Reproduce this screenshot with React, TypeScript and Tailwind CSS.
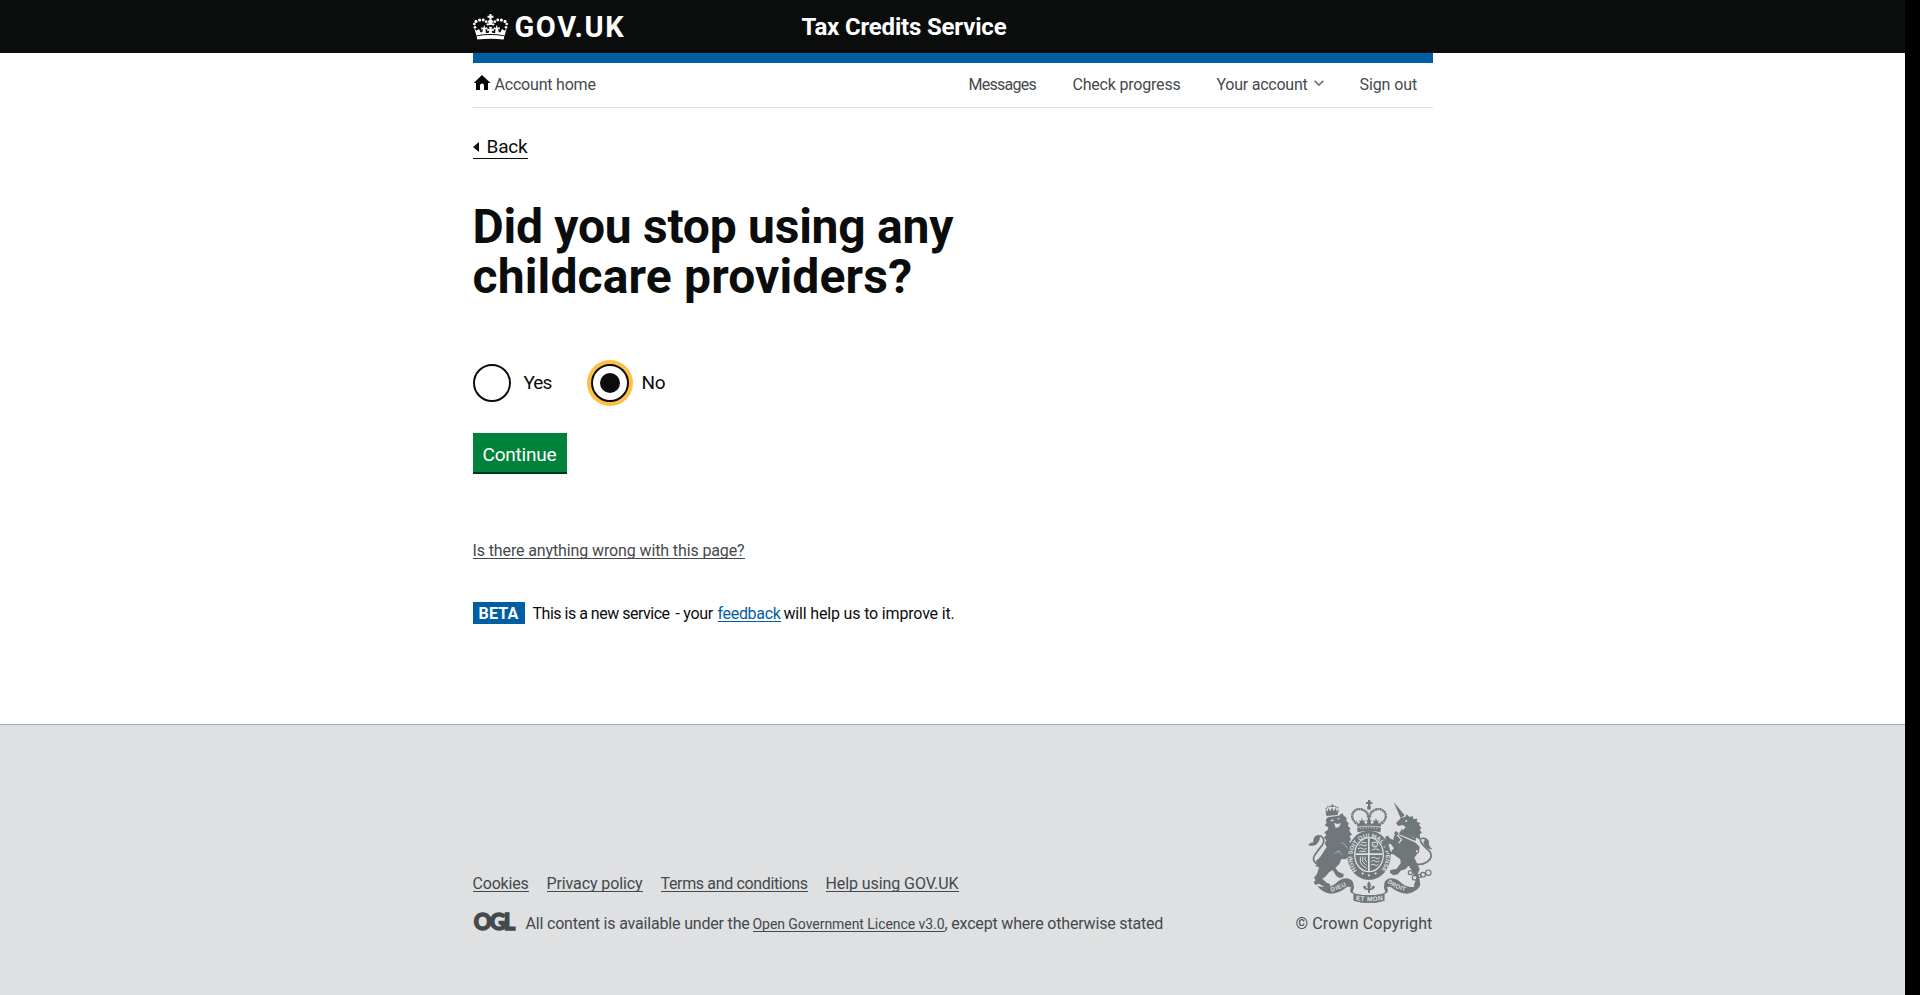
function Crown() {
  const beads: [number, number, number][] = [
    [29, 63, 4], [27, 53, 4], [32, 45, 4.6], [43, 41, 4.8], [54, 41, 4.4], [63, 46, 4.2], [68, 54, 3.6],
    [123, 63, 4], [125, 53, 4], [120, 45, 4.6], [109, 41, 4.8], [98, 41, 4.4], [89, 46, 4.2], [84, 54, 3.6],
  ];
  return (
    <svg className="block h-[26px] w-[35px]" viewBox="23 23 106 78" fill="#fff">
      {beads.map(([x, y, r]) => (
        <circle key={`${x}-${y}`} cx={x} cy={y} r={r} />
      ))}
      <path d="M73 23h6v5h6v6h-6v6l5 4-4 12h-8l-4-12 5-4v-6h-6v-6h6z" />
      <path d="M27 66 33 73 41 68 46 78 51 78 53 67 48 70 48 62 54 65 57 55 60 65 66 62 66 70 61 67 62 80 70 80 73 73 66 75 67 66 73 69 72 61 80 61 79 69 85 66 86 75 79 73 82 80 90 80 91 67 86 70 86 62 92 65 95 55 98 65 104 62 104 70 99 67 101 78 106 78 111 68 119 73 125 66 119 88 Q76 79 33 88Z" />
      <path d="M34 90Q76 82 118 90L116 100Q76 95 36 100Z" />
    </svg>
  );
}

function RoyalArms() {
  return (
    <svg className="block h-[103px] w-[125px]" viewBox="84 30 375 309" fill="#6f777b">
      {/* lion */}
      <path d="M136 58 142 65 145 54 151 64 156 52 161 64 168 53 170 65 177 56 173 75 139 78Z" />
      <path d="M138 57Q142 48 154 49Q170 47 175 56" fill="none" stroke="#6f777b" strokeWidth="4" strokeDasharray="4 2" />
      <path d="M152 47h3v-4h4v4h3v3h-10z" />
      <path d="M143 82 176 77 187 69 190 76 200 84 199 92 207 101 203 106 212 117 207 121 216 134 209 138 213 151 207 154 221 170 219 181 214 186 219 194 213 207 204 202 196 208 184 207 178 222 166 234 176 246 191 252 190 262 178 264 169 258 158 240 147 247 136 260 127 266 140 278 151 283 149 291 133 291 117 281 107 285 101 277 107 270 102 263 111 252 117 232 105 228 115 221 107 214 120 202 130 187 140 171 134 160 139 151 132 143 139 135 133 127 143 120 145 112 134 106 140 99 137 91Z" />
      <path d="M122 226Q91 216 105 194Q116 178 128 164Q136 147 124 139Q111 133 104 150" fill="none" stroke="#6f777b" strokeWidth="5" />
      <path d="M84 165Q91 157 100 157Q99 139 112 136Q126 139 115 156Q105 173 84 165Z" />
      <path d="M152 91l7-3 3 3-8 4zM171 86l8-3-2 6zM162 98l11 4 10-3-6 12-10 3z" fill="#dee0e2" />
      <path d="M183 157l12 7 8 12M163 190l16-7M172 180l15 15" fill="none" stroke="#dee0e2" strokeWidth="1.5" />
      {/* crown */}
      <path d="M264 30h7v6h6v6h-6v7h-7v-7h-6v-6h6z" />
      <circle cx="267" cy="53" r="6" />
      <g fill="none" stroke="#6f777b" strokeWidth="7" strokeDasharray="6 1.2">
        <path d="M229 101Q211 84 219 68Q232 50 254 62Q265 69 264 82" />
        <path d="M305 101Q323 84 315 68Q302 50 280 62Q269 69 270 82" />
      </g>
      <path d="M228 90 235 101 240 98 237 91 243 93 246 84 249 93 255 91 253 99 259 102 263 95 258 92 264 89 263 82 271 82 270 89 276 92 271 95 275 102 281 99 279 91 285 93 288 84 291 93 297 91 294 98 299 101 306 90 302 110Q267 104 232 110Z" />
      <path d="M231 113Q267 106 303 113L301 127Q267 117 233 127Z" />
      <path d="M240 116Q267 111 295 116" fill="none" stroke="#dee0e2" strokeWidth="2.5" strokeDasharray="4 4" />
      {/* garter and shield */}
      <ellipse cx="267" cy="196" rx="65" ry="74" />
      <ellipse cx="267" cy="194" rx="45" ry="53" fill="#dee0e2" />
      <ellipse cx="267" cy="194" rx="41" ry="49" />
      <path id="garter" d="M231 241A50 58 0 1 1 303 241" fill="none" />
      <text fill="#dee0e2" className="font-['Liberation_Sans'] text-[18px] font-bold">
        <textPath href="#garter">HONI SOIT QUI MAL Y PENSE</textPath>
      </text>
      <path d="M264 145h5v98h-5zM227 190h80v5h-80z" fill="#dee0e2" />
      <g fill="none" stroke="#dee0e2" strokeWidth="3">
        <path d="M236 166q7-5 13 0t12-2M234 176q7-5 13 0t13-1M238 184h20M245 158h14" />
        <path d="M277 157h15v11q-8 7-15 0zM281 163l7 9M275 180q10-7 24 0" />
        <path d="M241 200v17q6 13 20 19M248 200v15l12 12M255 200v10l6 6" />
        <path d="M274 204q8-5 13 0t13-1M274 214q7-5 13 0t12-2M273 225q7-5 12 0t9-2" />
      </g>
      <path d="M244 250l4-3 4 3-4 4zM263 256l4-3 4 3-4 4zM283 250l4-3 4 3-4 4z" fill="#dee0e2" />
      {/* unicorn */}
      <path d="M341 36 374 76 362 85Z" />
      <path d="M348 99 363 84 376 80 380 73 389 81 398 78 400 87 412 86 410 95 421 99 417 106 425 114 419 118 426 130 419 132 421 149 411 144 364 126 377 112 369 105 355 108Z" />
      <path d="M361 130 410 151" stroke="#6f777b" strokeWidth="5" strokeDasharray="6 3" />
      <path d="M362 123l4-9 3 12 8-7 2 12 10-6 0 12 11-5-2 11 11-4-4 13-49-20z" />
      <path d="M356 135 407 158 419 171 417 184 403 203 411 220 419 237 413 252 419 270 421 286 410 294 401 288 407 271 398 246 386 227 377 237 362 242 354 253 340 256 330 248 331 240 349 237 362 220 361 208 346 197 334 183 342 175 333 163 324 160 316 148 317 139 325 137 328 144 340 150 342 139 351 126Z" />
      <path d="M330 157 323 167 332 185 348 188 346 194 328 191 315 169 321 154ZM347 123l8 5-6 9-7-6z" />
      <path d="M408 222Q424 226 441 216Q461 202 449 184Q426 164 422 154Q419 143 431 145Q443 147 445 158" fill="none" stroke="#6f777b" strokeWidth="5" />
      <path d="M430 158Q432 144 446 155Q445 169 458 178Q438 179 430 158Z" />
      <circle cx="379" cy="93" r="3" fill="#dee0e2" />
      <g fill="none" stroke="#6f777b" strokeWidth="3.5">
        <circle cx="391" cy="248" r="6" fill="#dee0e2" />
        <circle cx="404" cy="263" r="7" fill="#dee0e2" />
        <circle cx="419" cy="258" r="5" />
        <circle cx="429" cy="254" r="7" />
        <circle cx="445" cy="248" r="8" />
        <circle cx="411" cy="184" r="5" fill="#dee0e2" />
        <path d="M351 135l14 14-9 10" stroke="#dee0e2" />
      </g>
      {/* motto scroll */}
      <path d="M112 288Q145 297 166 281Q184 264 202 265Q222 269 220 287L208 292Q210 290 202 290Q176 311 151 311Q126 307 112 288Z" />
      <path d="M421 288Q388 297 367 281Q349 264 331 265Q311 269 313 287L325 292Q323 290 331 290Q357 311 382 311Q407 307 421 288Z" />
      <path d="M208 276Q216 285 211 298Q208 309 221 312L221 332Q267 345 313 332L313 312Q326 309 323 298Q318 285 326 276L314 284Q310 292 314 300Q320 310 304 312Q267 320 230 312Q214 310 220 300Q224 292 220 284Z" />
      <path d="M221 312Q267 320 313 312V332Q267 345 221 332Z" />
      <path id="dieu" d="M154 305Q184 298 207 281" fill="none" />
      <path id="mon" d="M227 330Q267 338 311 330" fill="none" />
      <path id="droit" d="M322 277Q350 301 388 305" fill="none" />
      <g fill="#dee0e2" className="font-['Liberation_Sans'] text-[18px] font-bold">
        <text className="tracking-[2px]"><textPath href="#dieu">DIEU</textPath></text>
        <text className="text-[20px] tracking-[1px]"><textPath href="#mon">ET MON</textPath></text>
        <text className="tracking-[1px]"><textPath href="#droit">DROIT</textPath></text>
      </g>
      <path d="M267 274q-9 10-3 20l-4 2q-1-12-9-8-4 5 3 9-2-1 5 3h5v8h6v-8h5q7-4 5-3 7-4 3-9-8-4-9 8l-4-2q6-10-3-20z" />
    </svg>
  );
}

function Radio({ label, checked, tracking }: { label: string; checked?: boolean; tracking: string }) {
  return (
    <label className="flex items-center">
      <span
        className={`flex size-[38px] shrink-0 items-center justify-center rounded-full border-2 border-[#0b0c0c] bg-white ${
          checked ? "shadow-[0_0_0_4px_#ffbf47]" : ""
        }`}
      >
        {checked && <span className="size-5 rounded-full bg-[#0b0c0c]" />}
      </span>
      <span className={`ml-[13px] text-[19px] leading-[24px] text-[#0b0c0c] ${tracking}`}>{label}</span>
    </label>
  );
}

const footerLinks = [
  { label: "Cookies", style: "w-[56px] tracking-[-0.2px]" },
  { label: "Privacy policy", style: "w-[96px] tracking-[-0.11px]" },
  { label: "Terms and conditions", style: "w-[147px] tracking-[-0.35px]" },
  { label: "Help using GOV.UK", style: "w-[133px] tracking-[-0.08px]" },
];

export default function App() {
  return (
    <div className="flex h-[995px] overflow-hidden bg-black font-[Roboto,sans-serif] text-[16px] leading-5 text-[#0b0c0c]">
      <div className="flex w-[1905px] flex-col bg-white">
        <header className="h-[53px] bg-[#0b0c0c] text-white">
          <div className="mx-auto flex h-full w-[960px] items-center">
            <div className="flex w-[329px] items-center">
              <Crown />
              <span className="ml-[7px] text-[29px] leading-[30px] font-bold tracking-[1.6px]">GOV.UK</span>
            </div>
            <span className="text-[24px] leading-[30px] font-bold tracking-[-0.18px]">Tax Credits Service</span>
          </div>
        </header>

        <main className="mx-auto flex w-[960px] flex-col items-start">
          <div className="h-[10px] w-full bg-[#005ea5]" />
          <nav className="flex h-[45px] w-full items-start justify-between border-b border-[#dee0e2] pt-[12px] pr-[16px] whitespace-nowrap text-[#45494c]">
            <a className="flex">
              <svg className="mr-[4px] h-[15px] w-[18px]" viewBox="0 0 18 15" fill="#000">
                <path d="M9 0 17.5 8H15v7h-4v-4.5a2 2 0 0 0-4 0V15H3V8H.8Z" />
              </svg>
              <span className="tracking-[-0.2px]">Account home</span>
            </a>
            <div className="flex">
              <a className="w-[104px] tracking-[-0.75px]">Messages</a>
              <a className="w-[144px] tracking-[-0.2px]">Check progress</a>
              <a className="flex w-[143px]">
                <span className="w-[97px] tracking-[-0.24px]">Your account</span>
                <svg className="mt-[5px] h-[7px] w-[10px]" viewBox="0 0 10 7" fill="none" stroke="#6f777b" strokeWidth="1.8">
                  <path d="M.7.8 5 5.1 9.3.8" />
                </svg>
              </a>
              <a className="w-[57px] tracking-[-0.1px]">Sign out</a>
            </div>
          </nav>

          <a className="mt-[26px] flex h-[25px] w-[55px] items-center border-b border-[#0b0c0c] pt-px text-[19px]">
            <svg className="mr-[8px] h-[10px] w-[6px]" viewBox="0 0 6 10" fill="#0b0c0c">
              <path d="M6 0v10L0 5z" />
            </svg>
            <span className="tracking-[-0.19px]">Back</span>
          </a>

          <h1 className="mt-[43px] text-[48px] leading-[50px] font-bold whitespace-nowrap">
            <span className="block tracking-[-0.25px]">Did you stop using any</span>
            <span className="block tracking-[0.15px]">childcare providers?</span>
          </h1>

          <div className="mt-[62px] flex gap-[40px]">
            <div className="w-[78px]">
              <Radio label="Yes" tracking="tracking-[-1px]" />
            </div>
            <Radio label="No" checked tracking="tracking-[-0.2px]" />
          </div>

          <button className="mt-[31px] h-[39px] w-[94px] bg-[#00823b] pt-[4px] text-[19px] tracking-[-0.2px] text-white shadow-[0_2px_0_#003618]">
            Continue
          </button>

          <a className="mt-[69px] h-[18px] border-b border-[#45494c] tracking-[-0.12px] whitespace-nowrap text-[#45494c]">
            Is there anything wrong with this page?
          </a>

          <div className="mt-[43px] flex h-[22px] items-center whitespace-nowrap">
            <strong className="flex h-[22px] w-[52px] items-center justify-center bg-[#005ea5] pt-px font-bold tracking-[0.2px] text-white">
              BETA
            </strong>
            <span className="ml-[8px] w-[143px] pt-px tracking-[-0.49px]">This is a new service</span>
            <span className="w-[42px] pt-px tracking-[-0.29px]">- your</span>
            <a className="h-[18px] w-[63px] border-b border-[#005ea5] leading-[20px] tracking-[-0.32px] text-[#005ea5]">feedback</a>
            <span className="ml-[3px] pt-px tracking-[-0.17px]">will help us to improve it.</span>
          </div>
        </main>

        <footer className="mt-auto h-[271px] border-t border-[#a1acb2] bg-[#dee0e2] text-[#45494c]">
          <div className="mx-auto flex w-[960px] items-end justify-between pt-[75px] whitespace-nowrap">
            <div className="-mb-px">
              <div className="flex gap-[18px]">
                {footerLinks.map((link) => (
                  <a key={link.label} className={`h-[18px] border-b border-[#45494c] ${link.style}`}>
                    {link.label}
                  </a>
                ))}
              </div>
              <div className="mt-[21px] flex h-[22px] items-center">
                <svg className="-mt-[4px] h-[20px] w-[43px] overflow-visible" viewBox="0 0 43 20">
                  <text
                    x="0.8"
                    y="18"
                    textLength="41.5"
                    fill="#45494c"
                    stroke="#45494c"
                    strokeWidth="1.4"
                    className="font-[Lato] text-[22px] font-black"
                  >
                    OGL
                  </text>
                </svg>
                <span className="ml-[10px] w-[227px] tracking-[-0.18px]">All content is available under the</span>
                <a className="mt-[2px] h-[17px] w-[192px] self-start border-b border-[#45494c] text-[14px] leading-[18px] tracking-[-0.05px]">
                  Open Government Licence v3.0
                </a>
                <span className="tracking-[-0.18px]">, except where otherwise stated</span>
              </div>
            </div>
            <div className="flex flex-col items-end">
              <RoyalArms />
              <span className="mt-[11px] leading-[20px] tracking-[0.15px]">© Crown Copyright</span>
            </div>
          </div>
        </footer>
      </div>
    </div>
  );
}
